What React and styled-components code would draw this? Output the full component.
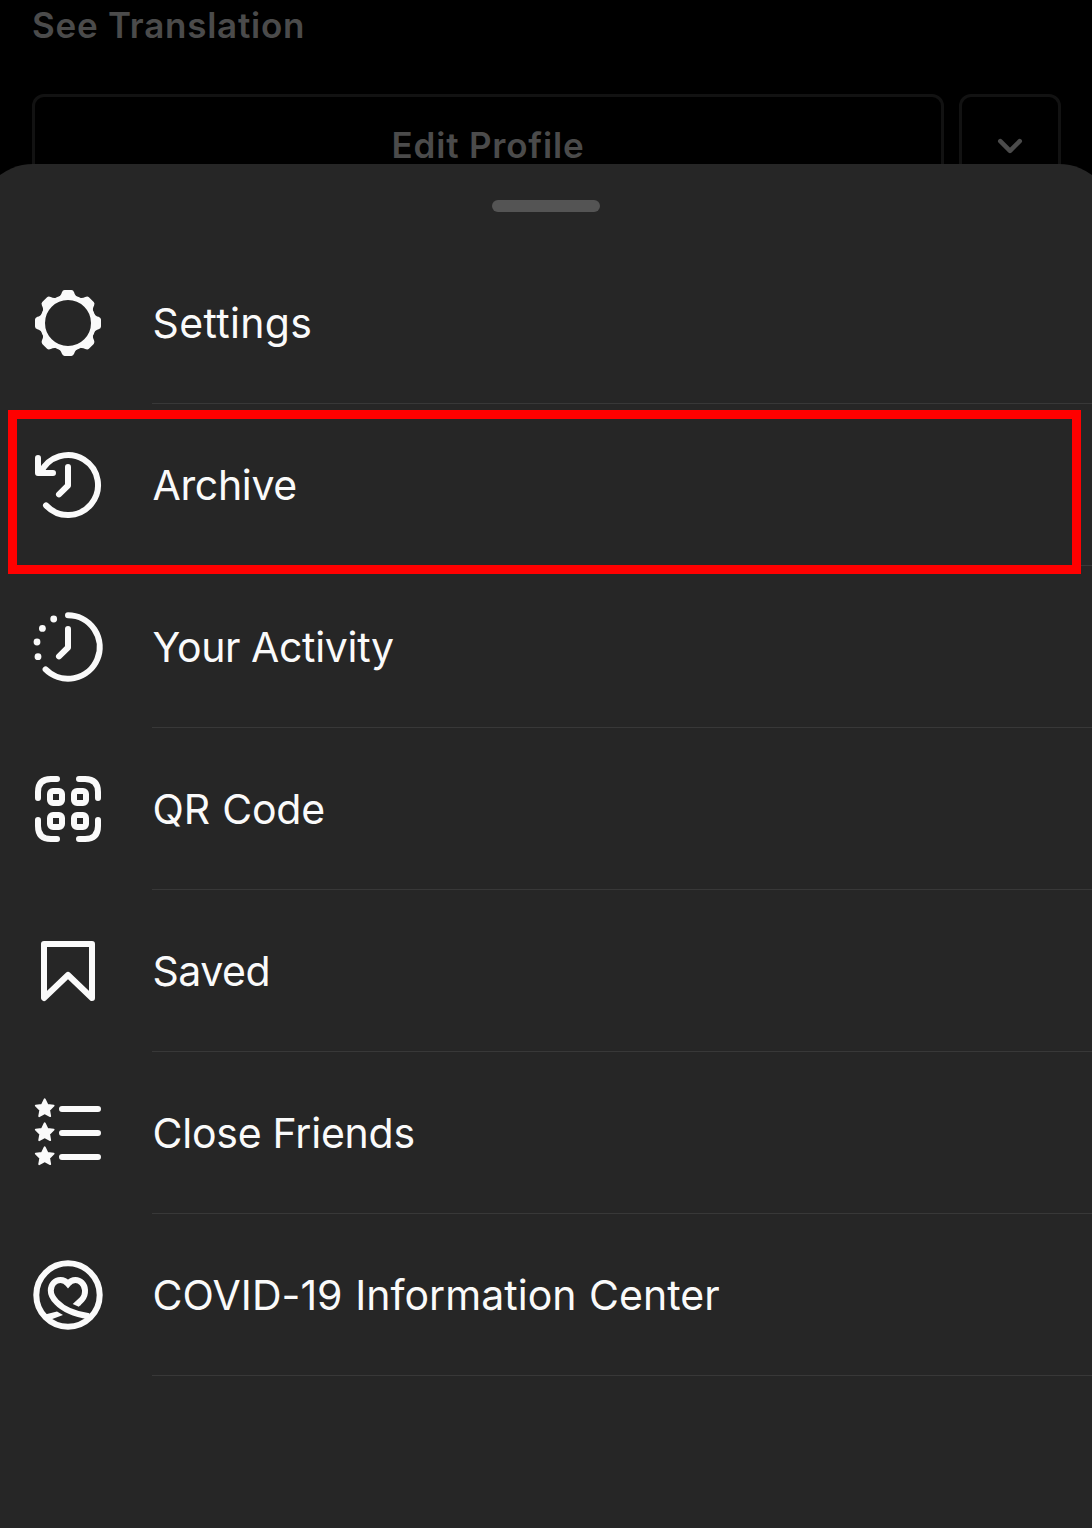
import React from "react";
import styled, { createGlobalStyle } from "styled-components";

const GlobalStyle = createGlobalStyle`
  * { box-sizing: border-box; }
  body { margin: 0; background: #000; }
`;

const Page = styled.div`
  display: flex;
  flex-direction: column;
  height: 1528px;
  overflow: hidden;
  background: #000;
  color: #fafafa;
  font-family: Inter, "Liberation Sans", sans-serif;
`;

const Profile = styled.header`
  flex: none;
  height: 164px;
  padding: 3px 31px 0 32px;
  color: #4b4b4b;
  font-size: 35px;
  font-weight: 600;
  line-height: 44px;
`;

const Translation = styled.div`
  height: 91px;
  letter-spacing: ${(p) => p.$tracking}px;
`;

const Actions = styled.div`
  display: flex;
  gap: 15px;
`;

const OutlineButton = styled.button`
  flex: ${(p) => (p.$wide ? "1" : "none")};
  width: ${(p) => (p.$wide ? "auto" : "102px")};
  height: 102px;
  padding: 0;
  display: flex;
  align-items: center;
  justify-content: center;
  border: 3px solid #121212;
  border-radius: 12px;
  background: transparent;
  color: inherit;
  font: inherit;
  letter-spacing: ${(p) => p.$tracking || 0}px;
`;

const Sheet = styled.main`
  position: relative;
  flex: 1;
  margin: 0 -22px;
  padding: 36px 22px 0;
  border-radius: 55px 55px 0 0;
  background: #262626;
`;

const Handle = styled.div`
  width: 108px;
  height: 12px;
  margin: 0 auto 30px;
  border-radius: 6px;
  background: #545454;
`;

const Row = styled.div`
  position: relative;
  display: flex;
  align-items: center;
  gap: 48px;
  height: 162px;
  padding-left: 32px;
`;

const Icon = styled.svg`
  flex: none;
  width: 72px;
  height: 72px;
  fill: none;
  stroke: #fafafa;
  stroke-width: 6;
  stroke-linecap: round;
  stroke-linejoin: round;
`;

const Label = styled.div`
  flex: 1;
  height: 162px;
  border-bottom: 1px solid #383838;
  font-size: 41px;
  line-height: 163px;
  letter-spacing: ${(p) => p.$tracking}px;
  word-spacing: ${(p) => p.$wordGap || 0}px;
  text-indent: 0.5px;
  white-space: nowrap;
`;

const Highlight = styled.div`
  position: absolute;
  left: 8px;
  top: 6px;
  width: 1073px;
  height: 164px;
  border: 9px solid #ff0000;
  z-index: 1;
`;

const GearRing = styled.circle`
  stroke-width: 5;
`;

const Star = styled.path`
  stroke-width: 1.8;
`;

const Ribbon = styled.path`
  stroke-linecap: butt;
  stroke-linejoin: miter;
`;

const GearIcon = () => (
  <Icon viewBox="0 0 72 72">
    <GearRing cx="36" cy="36" r="25.5" />
    <g fill="#fafafa" stroke="none">
      {[0, 45, 90, 135, 180, 225, 270, 315].map((a) => (
        <path
          key={a}
          transform={`translate(36 36) rotate(${a})`}
          d="M-9.6 -26C-7.6 -27.2 -6.8 -28.6 -6.2 -30.6Q-5.3 -33 -3.4 -33H3.4Q5.3 -33 6.2 -30.6C6.8 -28.6 7.6 -27.2 9.6 -26Z"
        />
      ))}
    </g>
  </Icon>
);

const ArchiveIcon = () => (
  <Icon viewBox="0 0 72 72">
    <path d="M8.6 23.8A30 30 0 1 1 14 56.4" />
    <path d="M6 9V24H21" />
    <path d="M36 18V36.5L27 45.3" />
  </Icon>
);

const ActivityIcon = () => (
  <Icon viewBox="0 0 72 72">
    <path d="M36 4.3A31.7 31.7 0 1 1 13.6 58.4" />
    <path d="M36 18V36.5L27 45.3" />
    <g fill="#fafafa" stroke="none">
      <circle cx="21.7" cy="8" r="3.4" />
      <circle cx="10.4" cy="17.4" r="3.4" />
      <circle cx="5" cy="31" r="3.4" />
      <circle cx="6" cy="45.7" r="3.4" />
    </g>
  </Icon>
);

const QrIcon = () => (
  <Icon viewBox="0 0 72 72">
    <path d="M6 25V19Q6 6 19 6H25M47 6H53Q66 6 66 19V25M66 47V53Q66 66 53 66H47M25 66H19Q6 66 6 53V47" />
    <rect x="18" y="18" width="12" height="12" rx="3" />
    <rect x="42" y="18" width="12" height="12" rx="3" />
    <rect x="18" y="42" width="12" height="12" rx="3" />
    <rect x="42" y="42" width="12" height="12" rx="3" />
  </Icon>
);

const SavedIcon = () => (
  <Icon viewBox="0 0 72 72">
    <path d="M12 9H60V63L36 40L12 63Z" />
  </Icon>
);

const starPath = Array.from({ length: 10 }, (_, i) => {
  const r = i % 2 ? 4.7 : 9.4;
  const a = (Math.PI / 5) * i - Math.PI / 2;
  return `${i ? "L" : "M"}${(r * Math.cos(a)).toFixed(2)} ${(r * Math.sin(a)).toFixed(2)}`;
}).join("") + "Z";

const FriendsIcon = () => (
  <Icon viewBox="0 0 72 72">
    <path d="M30 12H66M30 36H66M30 60H66" />
    <g fill="#fafafa">
      {[11.6, 35.6, 59.6].map((y) => (
        <Star key={y} d={starPath} transform={`translate(12.7 ${y})`} />
      ))}
    </g>
  </Icon>
);

const CovidIcon = () => (
  <Icon viewBox="0 0 72 72">
    <circle cx="36" cy="36" r="31.7" />
    <Ribbon d="M45.8 44.5L49.8 40.6C52.4 38 53.2 34.5 53 31C52.6 25 48 21 43.5 21C40 21 38 22.3 36 24.8C34 22.3 32 21 28.5 21C23 21 18.8 25.5 18.8 31.5C18.8 36 21 39.5 24.5 43C31 50 42 55 57 57.3" />
    <g fill="#fafafa" stroke="none">
      <path d="M44 42L40.7 44.9L46.8 47.8L49 45.6Z" />
      <path d="M13 55.6L25 52.5L31 56L19 60.5Z" />
    </g>
  </Icon>
);

const items = [
  { label: "Settings", icon: GearIcon, tracking: 0.36 },
  { label: "Archive", icon: ArchiveIcon, tracking: -0.35 },
  { label: "Your Activity", icon: ActivityIcon, tracking: -0.3, wordGap: -0.5 },
  { label: "QR Code", icon: QrIcon, tracking: -0.2, wordGap: 1 },
  { label: "Saved", icon: SavedIcon, tracking: -0.45 },
  { label: "Close Friends", icon: FriendsIcon, tracking: -0.24 },
  { label: "COVID-19 Information Center", icon: CovidIcon, tracking: 0.04, wordGap: 1 },
];

export default function App() {
  return (
    <Page>
      <GlobalStyle />
      <Profile>
        <Translation $tracking={0.75}>See Translation</Translation>
        <Actions>
          <OutlineButton $wide $tracking={0.8}>Edit Profile</OutlineButton>
          <OutlineButton aria-label="More">
            <svg width="30" height="20" viewBox="0 0 30 20" fill="none" stroke="#4b4b4b" strokeWidth="4.6" strokeLinecap="round" strokeLinejoin="round">
              <path d="M5.3 6.2L15 15.8L24.7 6.2" />
            </svg>
          </OutlineButton>
        </Actions>
      </Profile>
      <Sheet>
        <Handle />
        {items.map(({ label, icon: ItemIcon, tracking, wordGap }) => (
          <Row key={label}>
            <ItemIcon />
            <Label $tracking={tracking} $wordGap={wordGap}>{label}</Label>
            {label === "Archive" && <Highlight />}
          </Row>
        ))}
      </Sheet>
    </Page>
  );
}
